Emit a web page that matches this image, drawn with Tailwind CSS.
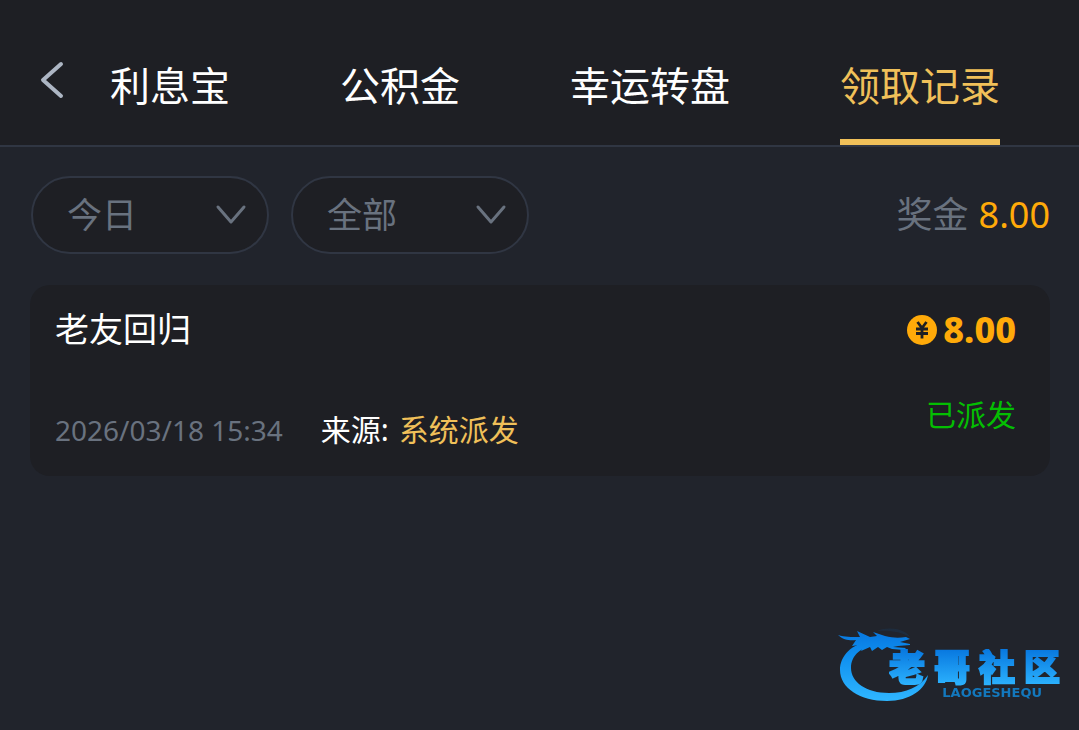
<!DOCTYPE html>
<html lang="zh-CN">
  <head>
    <meta charset="UTF-8" />
    <meta name="viewport" content="width=device-width, initial-scale=1.0" />
    <title>领取记录</title>
    <script src="https://cdn.jsdelivr.net/npm/@tailwindcss/browser@4"></script>
  </head>
  <body
    class="min-h-screen bg-[#21242c] font-['Noto_Sans','Noto_Sans_CJK_SC',sans-serif] text-white"
  >
    <header
      class="flex items-start border-b-2 border-[#303643] bg-[#1e1f24] pt-14 pl-10"
    >
      <button type="button" aria-label="返回" class="mt-1 w-[70px] shrink-0">
        <svg
          class="h-10 w-6"
          viewBox="0 0 24 40"
          fill="none"
          stroke="#adb6c4"
          stroke-width="4"
          stroke-linecap="round"
          stroke-linejoin="round"
        >
          <path d="M21 4 3 20l18 16" />
        </svg>
      </button>
      <nav class="flex gap-[110px] text-[40px] leading-[60px] whitespace-nowrap">
        <a href="#interest" class="pb-[23px]">利息宝</a>
        <a href="#fund" class="pb-[23px]">公积金</a>
        <a href="#wheel" class="pb-[23px]">幸运转盘</a>
        <a
          href="#records"
          aria-current="page"
          class="border-b-6 border-[#f0c059] pb-[23px] text-[#f0c059]"
          >领取记录</a
        >
      </nav>
    </header>

    <main class="pt-[29px] pr-[29px] pl-[30px]">
      <div class="flex items-center gap-[22px] pl-px">
        <div class="grid w-[238px] items-center">
          <select
            aria-label="日期"
            class="col-start-1 row-start-1 h-[78px] appearance-none rounded-full border-2 border-[#303643] bg-[#1e1f24] pl-[34px] text-[35px] text-[#69727f]"
          >
            <option>今日</option>
            <option>昨日</option>
          </select>
          <svg
            class="pointer-events-none col-start-1 row-start-1 mr-[22px] h-6 w-8 justify-self-end"
            viewBox="0 0 32 24"
            fill="none"
            stroke="#69727f"
            stroke-width="3"
            stroke-linecap="round"
            stroke-linejoin="round"
          >
            <path d="m3 4 13 15L29 4" />
          </svg>
        </div>
        <div class="grid w-[238px] items-center">
          <select
            aria-label="类型"
            class="col-start-1 row-start-1 h-[78px] appearance-none rounded-full border-2 border-[#303643] bg-[#1e1f24] pl-[34px] text-[35px] text-[#69727f]"
          >
            <option>全部</option>
            <option>已派发</option>
          </select>
          <svg
            class="pointer-events-none col-start-1 row-start-1 mr-[22px] h-6 w-8 justify-self-end"
            viewBox="0 0 32 24"
            fill="none"
            stroke="#69727f"
            stroke-width="3"
            stroke-linecap="round"
            stroke-linejoin="round"
          >
            <path d="m3 4 13 15L29 4" />
          </svg>
        </div>
        <p class="ml-auto flex gap-2.5 text-4xl text-[#69727f]">
          奖金 <span class="text-[#ffaa09]">8.00</span>
        </p>
      </div>

      <article
        class="mt-[31px] flex justify-between rounded-[20px] bg-[#1e1f24] pt-5 pr-[34px] pb-6 pl-[25px]"
      >
        <div class="flex flex-col justify-between">
          <h2 class="text-[34px] leading-[48px]">老友回归</h2>
          <div class="flex items-center gap-[38px]">
            <time
              datetime="2026-03-18T15:34"
              class="text-[28px] leading-[44px] text-[#69727f]"
              >2026/03/18 15:34</time
            >
            <p class="flex gap-2.5 text-[30px] leading-[44px]">
              来源: <span class="text-[#f0c059]">系统派发</span>
            </p>
          </div>
        </div>
        <div class="flex flex-col items-end gap-[38px] pb-[15px]">
          <p
            class="flex items-center gap-1.5 text-4xl leading-[50px] font-extrabold text-[#ffaa09]"
          >
            <svg class="size-[30px]" viewBox="0 0 30 30">
              <circle cx="15" cy="15" r="15" fill="#ffaa09" />
              <path
                d="m10.500 7 4.500 6 4.500-6M15 13v10.500M9 14h12M9 18.500h12"
                fill="none"
                stroke="#1e1f24"
                stroke-width="2.800"
              />
            </svg>
            8.00
          </p>
          <p class="text-[30px] leading-[44px] text-[#04be02]">已派发</p>
        </div>
      </article>
    </main>

    <!-- floating site logo -->
    <a
      href="#home"
      aria-label="老哥社区"
      class="fixed right-[17px] bottom-[27px] grid h-[76px] w-56"
    >
      <svg class="col-start-1 row-start-1 h-[76px] w-56" viewBox="0 0 224 76">
        <defs>
          <linearGradient
            id="logo-blue"
            gradientUnits="userSpaceOnUse"
            x1="0"
            y1="4"
            x2="0"
            y2="72"
          >
            <stop offset="0" stop-color="#0877df" />
            <stop offset=".35" stop-color="#0e8eef" />
            <stop offset="1" stop-color="#2eb5ff" />
          </linearGradient>
        </defs>
        <g fill="url(#logo-blue)">
          <path
            d="M34 13C13 17 2 29 2 43c0 18 20 31 47 31 23 0 39-12 41-26-8 12-22 18-39 18-23 0-38-11-38-25 0-13 10-21 27-24z"
          />
          <path
            d="M0 8c7 2 13 2 22 2l-3-6 13 6 7-1-4-4 12 4c8 2 14 2 21 1l4 2-10 3 10 2v1l-12 1-5 1 13 1-2 2-12-1-5-2-5 3-4-3-6 4-2-4-9 4 2-4-7 3 3-5-7 1 4-6C13 14 5 13 0 8z"
          />
          <path d="M39 4c12-5 28-2 33 6-9-5-19-7-33-6z" opacity=".1" />
        </g>
      </svg>
      <div
        class="col-start-1 row-start-1 flex flex-col items-end self-end pb-1 font-black whitespace-nowrap"
      >
        <div
          class="flex gap-[9px] bg-linear-to-b from-[#0877df] to-[#2eb5ff] bg-clip-text pr-0.5 text-4xl leading-[38px] text-transparent [-webkit-text-stroke:2px_transparent]"
        >
          <span>老</span><span>哥</span><span>社</span><span>区</span>
        </div>
        <span
          class="pr-5 font-['DejaVu_Sans',sans-serif] text-[13px] leading-[12px] text-[#1378bd]"
          >LAOGESHEQU</span
        >
      </div>
    </a>
  </body>
</html>
